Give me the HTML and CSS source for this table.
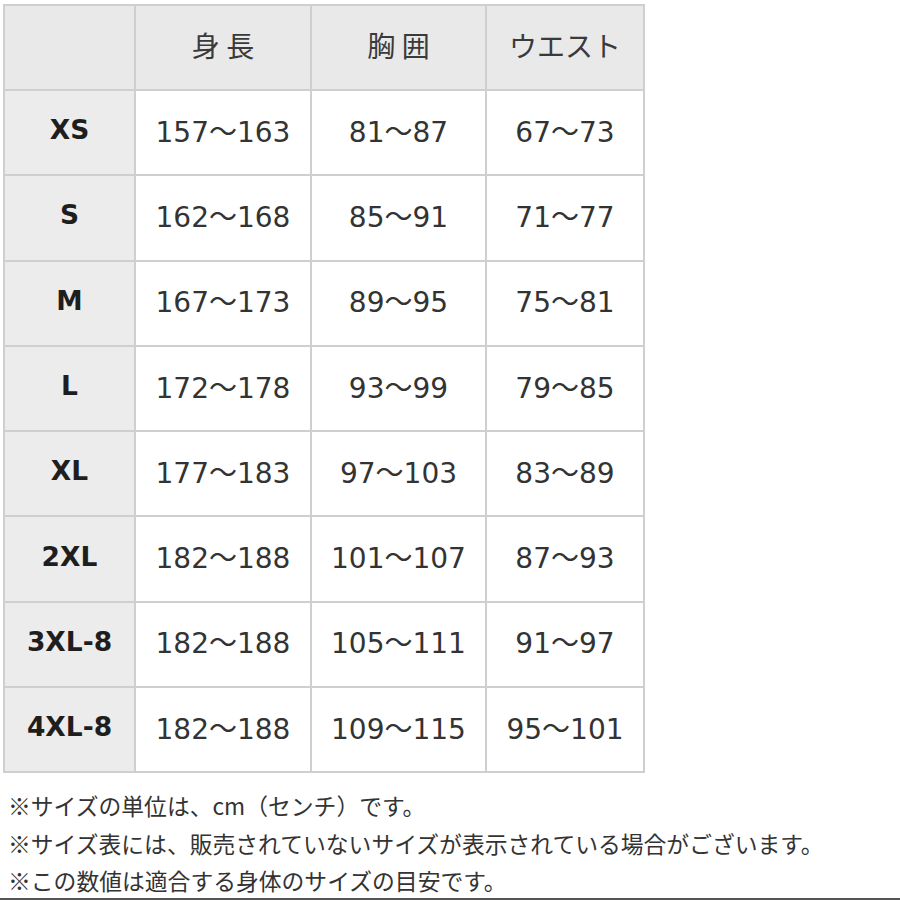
FILE: index.html
```html
<!DOCTYPE html>
<html lang="ja">
<head>
<meta charset="utf-8">
<link rel="stylesheet" href="styles.css">
</head>
<body>
<div class="page">
<table class="size-table">
  <colgroup><col class="c0"><col class="c1"><col class="c2"><col class="c3"></colgroup>
  <thead>
    <tr><th class="corner"></th><th>身 長</th><th>胸 囲</th><th>ウエスト</th></tr>
  </thead>
  <tbody>
    <tr><th>XS</th><td>157～163</td><td>81～87</td><td>67～73</td></tr>
    <tr><th>S</th><td>162～168</td><td>85～91</td><td>71～77</td></tr>
    <tr><th>M</th><td>167～173</td><td>89～95</td><td>75～81</td></tr>
    <tr><th>L</th><td>172～178</td><td>93～99</td><td>79～85</td></tr>
    <tr><th>XL</th><td>177～183</td><td>97～103</td><td>83～89</td></tr>
    <tr><th>2XL</th><td>182～188</td><td>101～107</td><td>87～93</td></tr>
    <tr><th>3XL-8</th><td>182～188</td><td>105～111</td><td>91～97</td></tr>
    <tr><th>4XL-8</th><td>182～188</td><td>109～115</td><td>95～101</td></tr>
  </tbody>
</table>
<div class="notes">
  <p>※サイズの単位は、cm（センチ）です。</p>
  <p>※サイズ表には、販売されていないサイズが表示されている場合がございます。</p>
  <p>※この数値は適合する身体のサイズの目安です。</p>
</div>
</div>
<div class="bottom-bar"></div>
</body>
</html>
```
FILE: styles.css
```css
html, body {
  margin: 0;
  padding: 0;
  background: #ffffff;
}
body {
  width: 900px;
  height: 900px;
  position: relative;
  overflow: hidden;
}
.page {
  padding: 4px 0 0 3px;
}
.size-table {
  border-collapse: collapse;
  table-layout: fixed;
  width: 640px;
}
.c0 { width: 131px; }
.c1 { width: 176px; }
.c2 { width: 175px; }
.c3 { width: 158px; }
.size-table th,
.size-table td {
  border: 2px solid #cfcfcf;
  height: 83.3px;
  padding: 0 0 6px 0;
  box-sizing: border-box;
  text-align: center;
  vertical-align: middle;
}
.size-table thead th {
  height: 85px;
  background: #e9e9e9;
  color: #3a3a3a;
  font-family: "Noto Sans CJK JP", sans-serif;
  font-weight: 400;
  font-size: 28px;
}
.size-table tbody th {
  height: 85.3px;
  background: #ececec;
  color: #1e1e1e;
  font-family: "DejaVu Sans", sans-serif;
  font-weight: 700;
  font-size: 26.5px;
}
.size-table td {
  background: #ffffff;
  color: #333333;
  font-family: "DejaVu Sans", "Noto Sans CJK JP", sans-serif;
  font-size: 28px;
}
.notes {
  margin-top: 14px;
  padding-left: 5px;
}
.notes p {
  margin: 0;
  font-family: "Noto Sans CJK JP", sans-serif;
  font-size: 22.8px;
  line-height: 37.5px;
  color: #333333;
}
.bottom-bar {
  position: absolute;
  left: 0;
  right: 0;
  bottom: 0;
  height: 2px;
  background: #555555;
}
```
